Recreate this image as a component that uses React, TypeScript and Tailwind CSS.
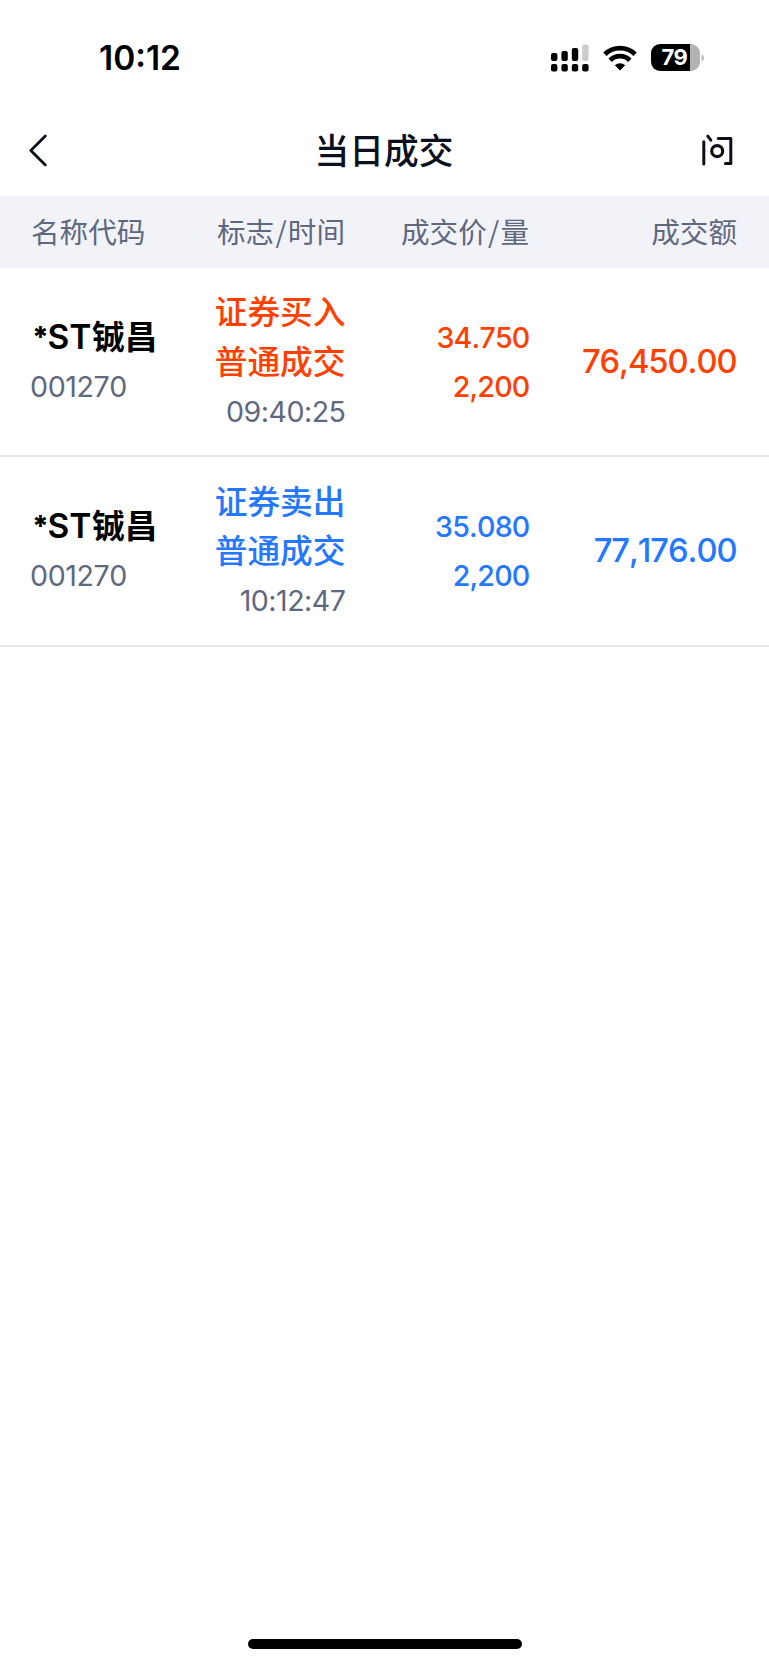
type Trade = {
  name: string;
  code: string;
  side: string;
  kind: string;
  time: string;
  price: string;
  volume: string;
  amount: string;
  buy: boolean;
};

const trades: Trade[] = [
  { name: "铖昌", code: "001270", side: "证券买入", kind: "普通成交", time: "09:40:25", price: "34.750", volume: "2,200", amount: "76,450.00", buy: true },
  { name: "铖昌", code: "001270", side: "证券卖出", kind: "普通成交", time: "10:12:47", price: "35.080", volume: "2,200", amount: "77,176.00", buy: false },
];

function Signal() {
  return (
    <svg width="38" height="28" viewBox="0 0 38 28">
      <g fill="#000">
        <rect x="0" y="9" width="6.4" height="8" rx="2" />
        <rect x="10.4" y="7" width="6.4" height="10" rx="2" />
        <rect x="20.8" y="4" width="6.4" height="13" rx="2" />
        <rect x="0" y="20" width="6.4" height="7.6" rx="2" />
        <rect x="10.4" y="20" width="6.4" height="7.6" rx="2" />
        <rect x="20.8" y="20" width="6.4" height="7.6" rx="2" />
        <rect x="31.2" y="20" width="6.4" height="7.6" rx="2" />
      </g>
      <rect x="31.2" y="0.6" width="6.4" height="16.4" rx="2" fill="#cbcbcb" />
    </svg>
  );
}

function Wifi() {
  return (
    <svg width="34" height="26" viewBox="0 0 34 26">
      <g fill="none" stroke="#000" strokeWidth="4.8">
        <path d="M1.9 9.3 A21.6 21.6 0 0 1 32.1 9.3" />
        <path d="M7.1 15.2 A13.9 13.9 0 0 1 26.9 15.2" />
      </g>
      <path d="M17 25.4 L11.8 20.2 A7.6 7.6 0 0 1 22.2 20.2 Z" fill="#000" />
    </svg>
  );
}

function Battery() {
  return (
    <div className="flex items-center gap-[1px]">
      <div className="flex h-[27px] w-[49px] items-center overflow-hidden rounded-[9px] bg-[linear-gradient(90deg,#000_39px,#b3b3b3_39px)] pl-[10.5px]">
        <span className="text-[22px] font-bold leading-[27px] tracking-[-0.5px] text-white">79</span>
      </div>
      <svg width="4" height="10" viewBox="0 0 4 10">
        <path d="M0.6 1 A4.6 4.6 0 0 1 0.6 9 Z" fill="#b3b3b3" />
      </svg>
    </div>
  );
}

function Row({ trade }: { trade: Trade }) {
  return (
    <li className={`grid h-[189.3px] grid-cols-[175px_170.5px_184px_207px] items-center border-b-2 border-[#e2e5ea] pt-[1px] text-[28.6px] leading-[49.2px] [font-kerning:none] ${trade.buy ? "text-[#ff4000]" : "text-[#2477ff]"}`}>
      <div className="pl-[30px]">
        <div className="flex whitespace-nowrap pl-[2px] text-[32.7px] text-black">
          <span className="w-[15.5px] -translate-y-[1px] text-[29px] font-extrabold">*</span>
          <span className="w-[44.5px] text-[33.5px] font-semibold">ST</span>
          <span className="font-bold">{trade.name}</span>
        </div>
        <div className="tracking-[-0.4px] text-[#5f687e]">{trade.code}</div>
      </div>
      <div className="text-right">
        <div className="text-[32.7px] font-medium">{trade.side}</div>
        <div className="text-[32.7px] font-medium">{trade.kind}</div>
        <div className="tracking-[-0.5px] text-[#5f687e]">{trade.time}</div>
      </div>
      <div className="text-right font-[450] tracking-[-0.8px]">
        <div>{trade.price}</div>
        <div>{trade.volume}</div>
      </div>
      <div className="-mt-[1px] text-right text-[32.7px] font-[450] tracking-[-1.05px]">{trade.amount}</div>
    </li>
  );
}

function Slash() {
  return <span className="mx-[1.2px]">/</span>;
}

export default function App() {
  return (
    <div className="flex h-[1665px] w-[769px] flex-col bg-white font-['Inter','Noto_Sans_CJK_SC',sans-serif]">
      <div className="flex h-[105px] items-center justify-between pt-[10px] pl-[99px] pr-[64px]">
        <span className="pt-[1px] text-[33.5px] font-semibold leading-[40px]">10:12</span>
        <div className="flex items-center">
          <Signal />
          <div className="ml-[14px]"><Wifi /></div>
          <div className="ml-[14px]"><Battery /></div>
        </div>
      </div>
      <header className="grid h-[91px] grid-cols-[1fr_auto_1fr] items-center pl-[26px] pr-[35px]">
        <svg width="24" height="34" viewBox="0 0 24 34" fill="none" stroke="#0b0f19" strokeWidth="2.8" strokeLinecap="round" strokeLinejoin="round">
          <path d="M19.3 2 L4.8 16.5 L19.3 31" />
        </svg>
        <h1 className="translate-x-[4px] pt-[1px] text-[34.7px] font-medium leading-[52px] text-[#0b1020]">当日成交</h1>
        <svg className="justify-self-end" width="32" height="34" viewBox="0 0 32 34" fill="none" stroke="#0b0f19" strokeWidth="3" strokeLinecap="round" strokeLinejoin="round">
          <path d="M1.8 7.7 V29.9 M5.8 2.2 L8.8 6.2 M16.3 4.6 H28.8 V29.6 H23.4" />
          <circle cx="15.2" cy="17.1" r="5.5" strokeWidth="3.2" />
        </svg>
      </header>
      <div className="grid h-[72px] grid-cols-[175px_170px_184px_208px] items-center bg-[#f2f3f8] pb-[2px] font-['Noto_Sans_CJK_SC',sans-serif] text-[28.6px] leading-[42px] text-[#5f687e]">
        <span className="pl-[31px]">名称代码</span>
        <span className="text-right">标志<Slash />时间</span>
        <span className="text-right">成交价<Slash />量</span>
        <span className="text-right">成交额</span>
      </div>
      <ul>
        {trades.map((t) => (
          <Row key={t.time} trade={t} />
        ))}
      </ul>
      <div className="mt-auto flex justify-center pb-[16px]">
        <div className="h-[10px] w-[274px] rounded-full bg-black" />
      </div>
    </div>
  );
}
